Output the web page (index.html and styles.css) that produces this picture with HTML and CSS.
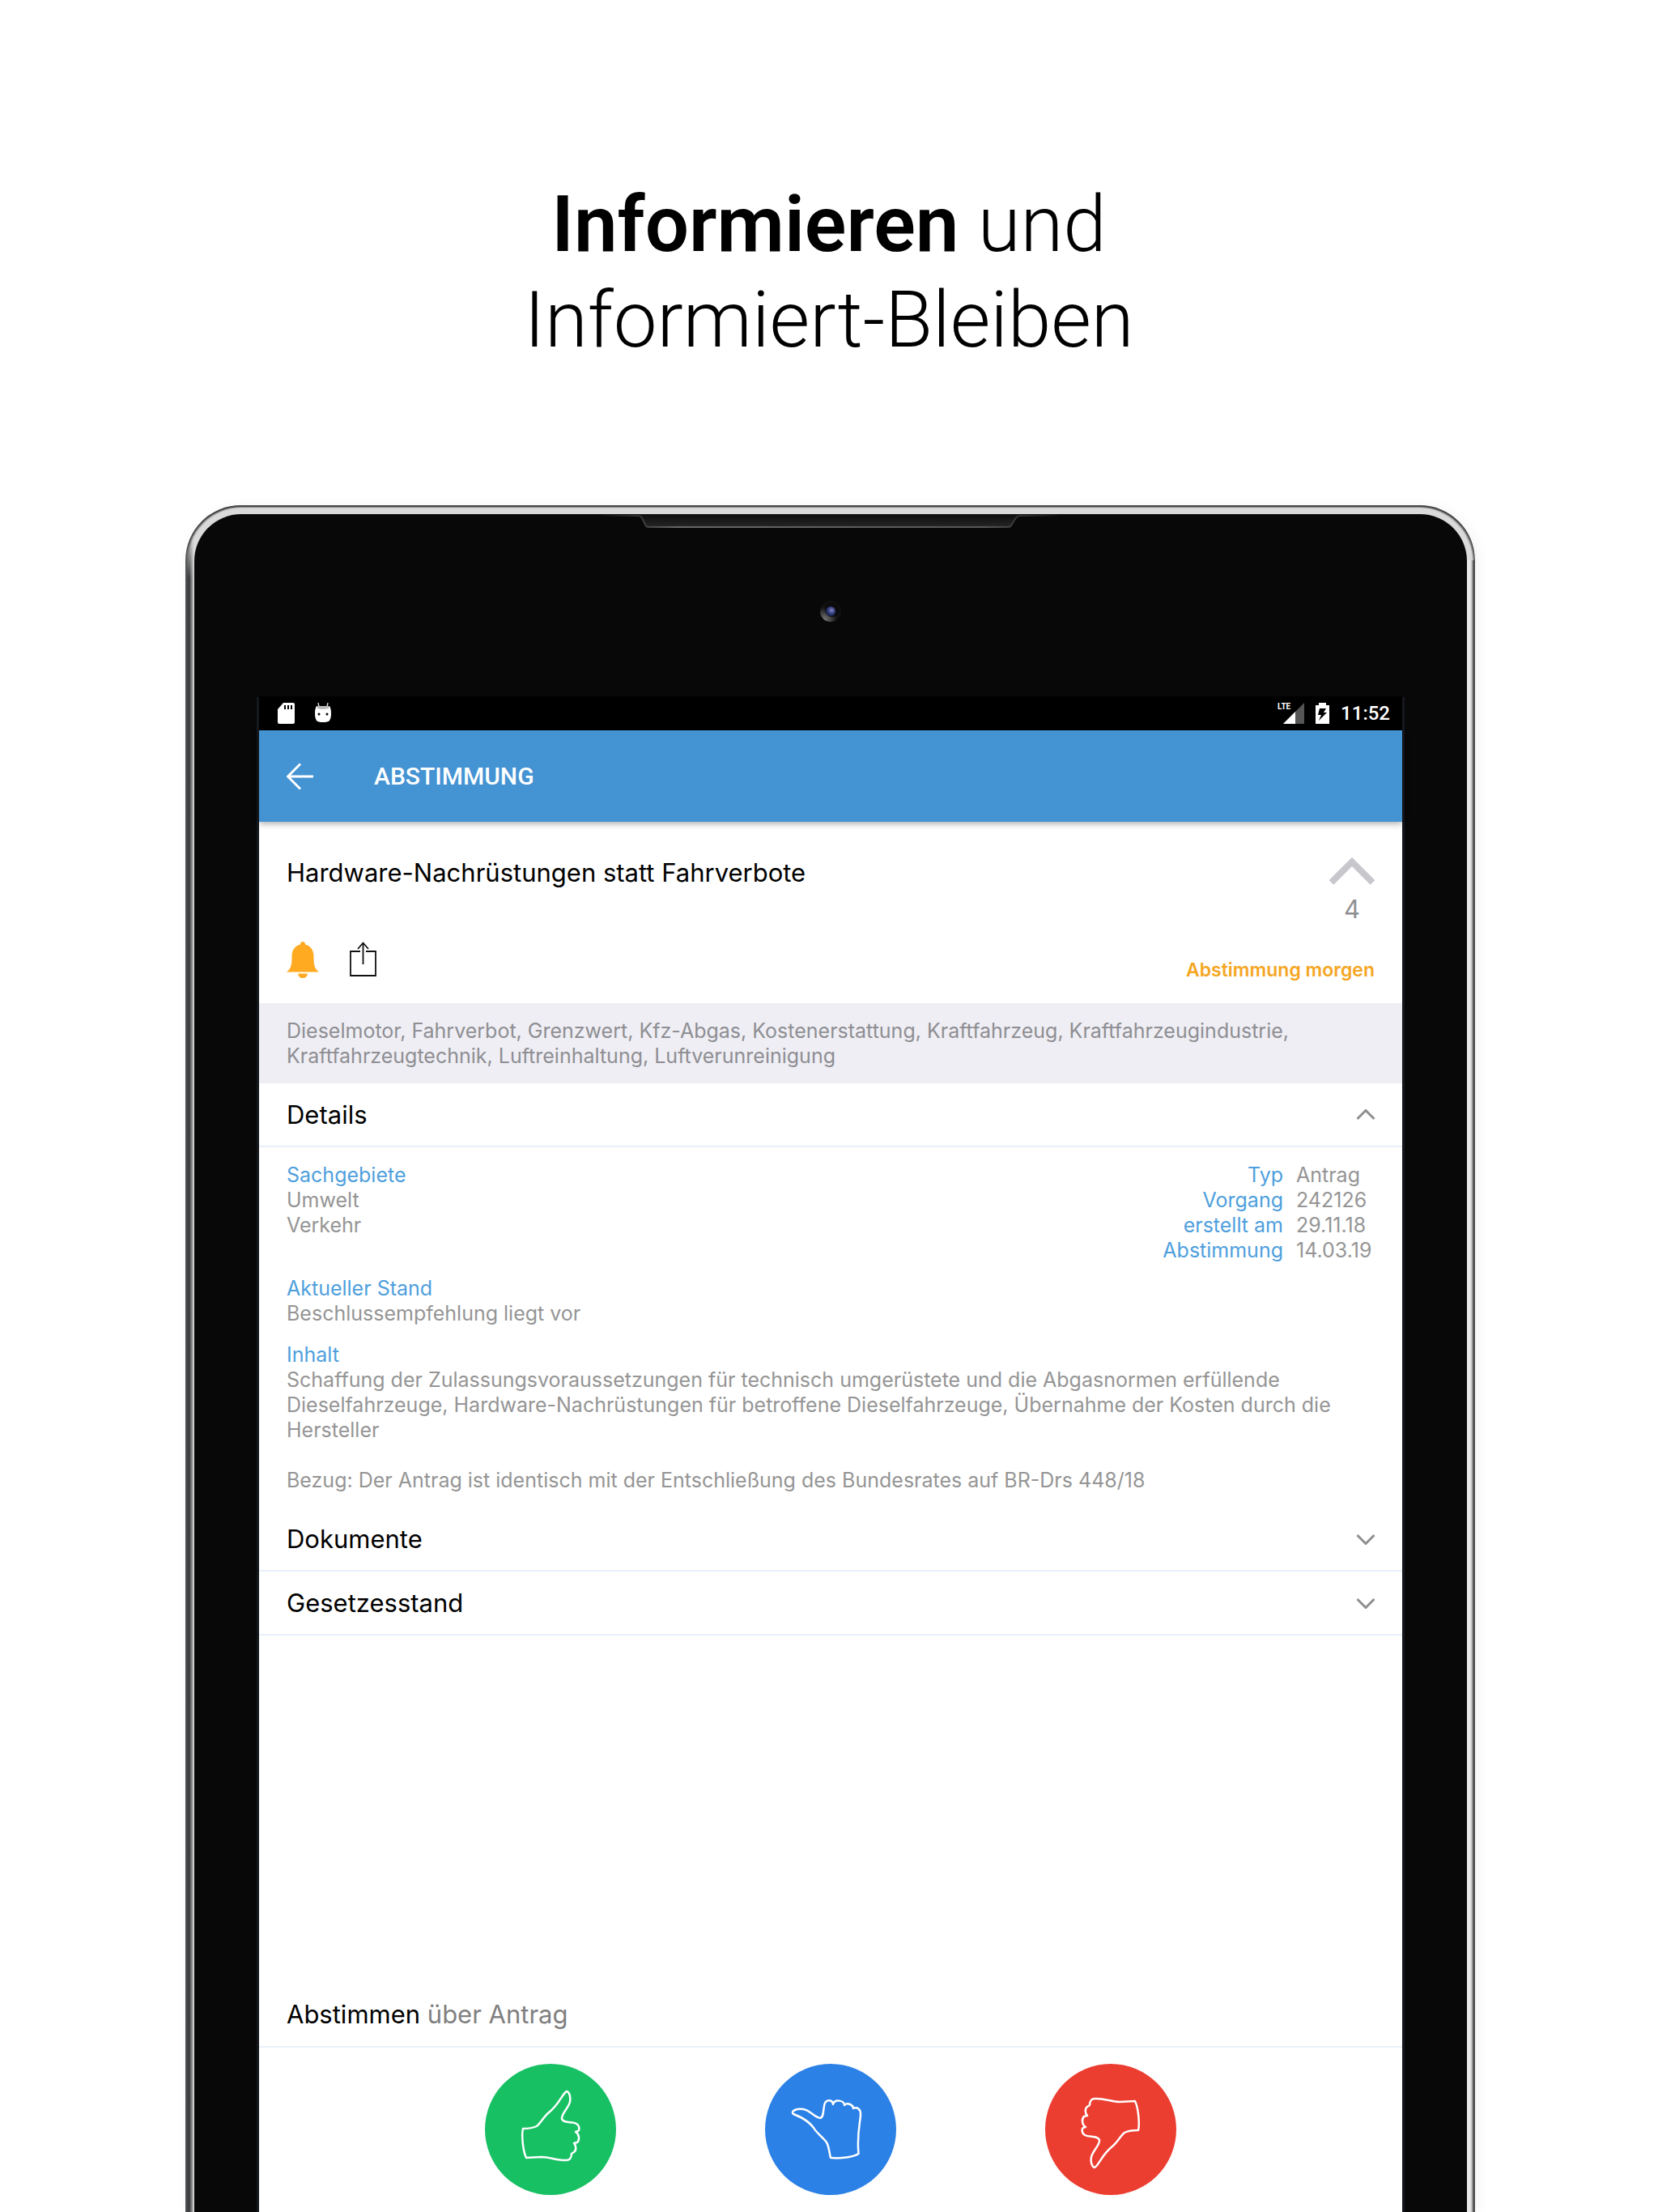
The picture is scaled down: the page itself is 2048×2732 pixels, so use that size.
FILE: index.html
```html
<!DOCTYPE html>
<html lang="de">
<head>
<meta charset="utf-8">
<meta name="viewport" content="width=device-width, initial-scale=1">
<title>Informieren und Informiert-Bleiben</title>
<link rel="stylesheet" href="styles.css">
</head>
<body>
<div class="page">
  <h1 class="headline"><strong>Informieren</strong> und<br>Informiert-Bleiben</h1>

  <div class="tablet">
    <div class="bezel">
      <svg class="speaker" width="560" height="24" viewBox="0 0 560 24" aria-hidden="true">
        <defs>
          <linearGradient id="edge" x1="0" x2="1" y1="0" y2="0">
            <stop offset="0" stop-color="#555" stop-opacity="0"/>
            <stop offset=".16" stop-color="#666"/>
            <stop offset=".84" stop-color="#555"/>
            <stop offset="1" stop-color="#555" stop-opacity="0"/>
          </linearGradient>
          <linearGradient id="slot" x1="0" x2="0" y1="0" y2="1">
            <stop offset="0" stop-color="#0c0c0c"/>
            <stop offset="1" stop-color="#262626"/>
          </linearGradient>
        </defs>
        <path d="M0 0H560V2H515Q510 2 508 6L503 14Q502 16 499 16H55Q52 16 51 13L47 5Q46 2 42 2H0Z" fill="url(#slot)"/>
        <path d="M0 2H42Q46 2 47 5L51 13Q52 16 55 16H499Q502 16 503 14L508 6Q510 2 515 2H560" fill="none" stroke="url(#edge)" stroke-width="2"/>
      </svg>
      <svg class="camera" width="26" height="26" viewBox="0 0 26 26" aria-hidden="true">
        <defs>
          <radialGradient id="glare" cx=".2" cy=".9" r=".6">
            <stop offset="0" stop-color="#777"/>
            <stop offset="1" stop-color="#111"/>
          </radialGradient>
          <radialGradient id="lens" cx=".6" cy=".4" r=".6">
            <stop offset="0" stop-color="#8a86c0"/>
            <stop offset=".5" stop-color="#3b4688"/>
            <stop offset="1" stop-color="#16224a"/>
          </radialGradient>
        </defs>
        <circle cx="13" cy="13" r="13" fill="url(#glare)"/>
        <circle cx="15" cy="11" r="9" fill="#0b0b0d"/>
        <circle cx="13" cy="13" r="6" fill="url(#lens)"/>
      </svg>

      <div class="screen">
        <div class="statusbar">
          <div class="status-group status-left">
            <svg width="21" height="26" viewBox="0 0 21 26" aria-hidden="true">
              <path d="M7 0H19Q21 0 21 2V24Q21 26 19 26H2Q0 26 0 24V8Z" fill="#fff"/>
              <path d="M8 3H10V8H8ZM12 3H14V8H12ZM16 3H18V8H16Z" fill="#000"/>
            </svg>
            <svg width="22" height="26" viewBox="0 0 22 26" aria-hidden="true">
              <path d="M6 5L5 0M16 5L17 0" stroke="#ddd" stroke-width="1.4"/>
              <path d="M3 4H19Q21 7 21 13Q21 19 19 22Q17 24 11 24Q5 24 3 22Q1 19 1 13Q1 7 3 4Z" fill="#fff"/>
              <path d="M3 4H19L18 7Q11 9 4 7Z" fill="#bbb"/>
              <circle cx="6" cy="14" r="1.5"/><circle cx="16" cy="14" r="1.5"/>
            </svg>
          </div>
          <div class="status-group">
            <div class="signal">
              <span class="network">LTE</span>
              <svg width="26" height="26" viewBox="0 0 26 26" aria-hidden="true">
                <path d="M26 0V26H0Z" fill="#555"/>
                <path d="M15 11V26H0Z" fill="#fff"/>
              </svg>
            </div>
            <svg width="17" height="26" viewBox="0 0 17 26" aria-hidden="true">
              <path d="M4 0H13V3H17V26H0V3H4Z" fill="#fff"/>
              <path d="M5 7H13L10 12H14L4 22L7 15H3Z" fill="#000"/>
            </svg>
            <time class="clock">11:52</time>
          </div>
        </div>

        <header class="appbar">
          <button class="icon-button" type="button" aria-label="Zurück">
            <svg width="34" height="34" viewBox="0 0 34 34" aria-hidden="true">
              <path d="M33 17H2M17 1.5L1.500 17L17 32.500" fill="none" stroke="#fff" stroke-width="3"/>
            </svg>
          </button>
          <h2 class="appbar-title">ABSTIMMUNG</h2>
        </header>

        <main class="content">
          <section class="procedure">
            <h3 class="procedure-title">Hardware-Nachrüstungen statt Fahrverbote</h3>
            <button class="score" type="button" aria-label="Relevanz 4">
              <svg width="56" height="34" viewBox="0 0 56 34" aria-hidden="true">
                <path d="M2.500 31L28 5.500L53.500 31" fill="none" stroke="#c7c7cc" stroke-width="8"/>
              </svg>
              <span>4</span>
            </button>
            <div class="actions">
              <button class="icon-button" type="button" aria-label="Benachrichtigen">
                <svg width="40" height="46" viewBox="0 0 40 46" aria-hidden="true">
                  <path d="M20 0C22 0 23 1.500 23 3.500C30 5 33.500 11 33.500 18C33.500 28 34 33 40 37.500H0C6 33 6.500 28 6.500 18C6.500 11 10 5 17 3.500C17 1.500 18 0 20 0Z" fill="#ffaa20"/>
                  <path d="M14 39.500H26Q25 45 20 45Q15 45 14 39.500Z" fill="#ffaa20"/>
                </svg>
              </button>
              <button class="icon-button" type="button" aria-label="Teilen">
                <svg width="34" height="46" viewBox="0 0 34 46" aria-hidden="true">
                  <path d="M14 12H2V42H33V12H21M17.500 28V2M11 9L17.500 1.500L24 9" fill="none" stroke="#111" stroke-width="1.8"/>
                </svg>
              </button>
            </div>
            <p class="due">Abstimmung morgen</p>
          </section>

          <p class="tags">Dieselmotor, Fahrverbot, Grenzwert, Kfz-Abgas, Kostenerstattung, Kraftfahrzeug, Kraftfahrzeugindustrie, Kraftfahrzeugtechnik, Luftreinhaltung, Luftverunreinigung</p>

          <button class="fold" type="button" aria-expanded="true" aria-controls="details">
            Details
            <svg width="24" height="14" viewBox="0 0 24 14" aria-hidden="true"><path d="M1.500 12L12 1.500L22.500 12" fill="none" stroke="#8f8f8f" stroke-width="3"/></svg>
          </button>
          <section class="details" id="details">
            <div class="detail-top">
              <div>
                <h4 class="label">Sachgebiete</h4>
                <p>Umwelt</p>
                <p>Verkehr</p>
              </div>
              <dl class="facts">
                <dt>Typ</dt><dd>Antrag</dd>
                <dt>Vorgang</dt><dd>242126</dd>
                <dt>erstellt am</dt><dd>29.11.18</dd>
                <dt>Abstimmung</dt><dd>14.03.19</dd>
              </dl>
            </div>
            <div>
              <h4 class="label">Aktueller Stand</h4>
              <p>Beschlussempfehlung liegt vor</p>
            </div>
            <div class="summary">
              <h4 class="label">Inhalt</h4>
              <p>Schaffung der Zulassungsvoraussetzungen für technisch umgerüstete und die Abgasnormen erfüllende Dieselfahrzeuge, Hardware-Nachrüstungen für betroffene Dieselfahrzeuge, Übernahme der Kosten durch die Hersteller</p>
              <p class="reference">Bezug: Der Antrag ist identisch mit der Entschließung des Bundesrates auf BR-Drs 448/18</p>
            </div>
          </section>

          <button class="fold" type="button" aria-expanded="false">
            Dokumente
            <svg width="24" height="14" viewBox="0 0 24 14" aria-hidden="true"><path d="M1.500 2L12 12.500L22.500 2" fill="none" stroke="#8f8f8f" stroke-width="3"/></svg>
          </button>
          <button class="fold" type="button" aria-expanded="false">
            Gesetzesstand
            <svg width="24" height="14" viewBox="0 0 24 14" aria-hidden="true"><path d="M1.500 2L12 12.500L22.500 2" fill="none" stroke="#8f8f8f" stroke-width="3"/></svg>
          </button>

          <section class="ballot">
            <h3 class="ballot-title">Abstimmen <span>über Antrag</span></h3>
            <div class="votes">
              <button class="vote vote-yes" type="button" aria-label="Zustimmen">
                <svg viewBox="0 0 162 162" aria-hidden="true">
                  <path d="M101 34C105 35 106 43 105 47C103 55 94 62 95 68C97 74 108 71 113 74C117 76 117 82 115 83L112 84C117 87 117 94 114 97L110 98C113 101 113 107 110 109L107 111C107 115 105 119 101 119C90 120 80 115 70 115L51 116C47 108 45 88 47 80C54 80 60 79 64 77C69 73 72 66 79 60C92 50 96 36 101 34Z"/>
                </svg>
              </button>
              <button class="vote vote-abstain" type="button" aria-label="Enthalten">
                <svg viewBox="0 0 162 162" aria-hidden="true">
                  <path d="M35 62C32 59 36 57 40 56C55 54 58 65 68 67C74 66 71 50 75 47C78 44 84 45 84 50C86 43 98 45 98 51C102 47 109 51 109 55C114 53 118 56 118 62C118 72 113 86 115.500 111C108 116 90 117 81 116C79 108 79 102 76 97C71 90 64 86 60 79C53 69 42 65 35 62Z"/>
                </svg>
              </button>
              <button class="vote vote-no" type="button" aria-label="Ablehnen">
                <svg viewBox="0 0 162 162" aria-hidden="true">
                  <path transform="rotate(180 81 81)" d="M101 34C105 35 106 43 105 47C103 55 94 62 95 68C97 74 108 71 113 74C117 76 117 82 115 83L112 84C117 87 117 94 114 97L110 98C113 101 113 107 110 109L107 111C107 115 105 119 101 119C90 120 80 115 70 115L51 116C47 108 45 88 47 80C54 80 60 79 64 77C69 73 72 66 79 60C92 50 96 36 101 34Z"/>
                </svg>
              </button>
            </div>
          </section>
        </main>
      </div>
    </div>
  </div>
</div>
</body>
</html>
```
FILE: styles.css
```css
* {
  box-sizing: border-box;
}

body,
h1,
h2,
h3,
h4,
p,
dl,
dd {
  margin: 0;
}

body {
  background: #fff;
  color: #000;
  font-family: Inter, "Liberation Sans", sans-serif;
}

button {
  border: 0;
  padding: 0;
  background: none;
  color: inherit;
  font: inherit;
  cursor: pointer;
}

svg {
  display: block;
  flex: none;
}

.page {
  display: flex;
  flex-direction: column;
  min-height: 100vh;
}

.headline {
  padding: 218px 24px 170px;
  font: 300 96px/118px Roboto, "Liberation Sans", sans-serif;
  text-align: center;
}

.headline strong {
  font-weight: 600;
}

/* Device */
.tablet {
  display: flex;
  flex: 1;
  margin: 0 226px 0 229px;
  padding: 11px 10px 0 11px;
  border-radius: 68px 68px 0 0;
  background:
    linear-gradient(180deg, #dadada, rgba(218, 218, 218, 0)) left 30px / 11px 60px no-repeat,
    linear-gradient(90deg, #3c3e40 5px, #8a8a8a 8px, #e8e8e8 11px) left 30px / 11px 100% no-repeat,
    linear-gradient(90deg, #e8e8e8 4px, #a8a8a8 7px, #333 8px) right 68px / 10px 100% no-repeat,
    #dadada;
  box-shadow: inset 0 2px 1px #444, inset 2px 2px 2px #555, inset -2px 2px 2px #555, 4px 2px 16px rgba(0, 0, 0, .05);
}

.bezel {
  position: relative;
  display: flex;
  flex: 1;
  padding: 225px 80px 0;
  border-radius: 58px 58px 0 0;
  background: #080808;
}

.speaker {
  position: absolute;
  top: 0;
  left: 50%;
  margin-left: -280px;
}

.camera {
  position: absolute;
  top: 107px;
  left: 50%;
  margin-left: -13px;
}

.screen {
  display: flex;
  flex: 1;
  flex-direction: column;
  background: #fff;
  box-shadow: 0 4px 0 3px #15181d;
}

.statusbar {
  display: flex;
  justify-content: space-between;
  align-items: center;
  height: 42px;
  padding: 0 15px 0 23px;
  background: #000;
  color: #fff;
}

.status-group {
  display: flex;
  align-items: center;
  gap: 14px;
}

.status-left {
  gap: 24px;
}

.signal {
  position: relative;
}

.network {
  position: absolute;
  top: 0;
  left: -7px;
  font: 700 10px/10px Roboto, sans-serif;
}

.clock {
  font: 500 24px/42px Roboto, sans-serif;
}

/* App */
.appbar {
  display: flex;
  align-items: center;
  gap: 74px;
  height: 113px;
  padding: 0 34px;
  background: #4493d3;
  color: #fff;
  box-shadow: 0 2px 8px rgba(0, 0, 0, .35);
}

.appbar-title {
  font: 500 30px/40px Roboto, sans-serif;
}

.content {
  display: flex;
  flex: 1;
  flex-direction: column;
  color: #959595;
  font-size: 25px;
  line-height: 31px;
}

.procedure {
  display: grid;
  grid-template-columns: 1fr auto;
  align-items: start;
  padding: 44px 34px 30px;
}

.procedure-title {
  color: #000;
  font-size: 31px;
  font-weight: 400;
  line-height: 38px;
}

.score {
  display: flex;
  flex-direction: column;
  align-items: center;
  justify-self: end;
  gap: 11px;
  color: #8e8e93;
  font-size: 31px;
  line-height: 38px;
}

.actions {
  display: flex;
  gap: 37px;
  padding-top: 21px;
}

.due {
  align-self: end;
  color: #f5a623;
  font-size: 23px;
  font-weight: 600;
  line-height: 22px;
}

.tags {
  padding: 19px 34px 18px;
  background: #efeef4;
  color: #8e8e93;
}

.fold,
.ballot-title {
  color: #000;
  font-size: 31px;
  font-weight: 400;
  line-height: 38px;
  border-bottom: 2px solid #e8f1fa;
}

.fold {
  display: flex;
  justify-content: space-between;
  align-items: center;
  height: 79px;
  padding: 0 33px 0 34px;
}

.details {
  display: flex;
  flex-direction: column;
  gap: 16px;
  padding: 19px 34px 18px;
}

.detail-top {
  display: flex;
  justify-content: space-between;
}

.label {
  color: #4f9fdd;
  font-weight: 400;
}

.facts {
  display: grid;
  grid-template-columns: auto minmax(97px, auto);
  column-gap: 16px;
}

.facts dt {
  color: #4f9fdd;
  text-align: right;
}

.summary {
  padding-top: 4px;
}

.reference {
  margin-top: 31px;
}

.ballot {
  margin-top: auto;
}

.ballot-title {
  padding: 20px 34px;
}

.ballot-title span {
  color: #808080;
}

.votes {
  display: flex;
  justify-content: center;
  gap: 184px;
  padding: 20px 34px 21px;
}

.vote {
  width: 162px;
  height: 162px;
  border-radius: 50%;
}

.vote path {
  fill: none;
  stroke: #fff;
  stroke-width: 2.5;
  stroke-linejoin: round;
}

.vote-yes {
  background: #18c064;
}

.vote-abstain {
  background: #2b81e5;
}

.vote-no {
  background: #ec3d31;
}
```
